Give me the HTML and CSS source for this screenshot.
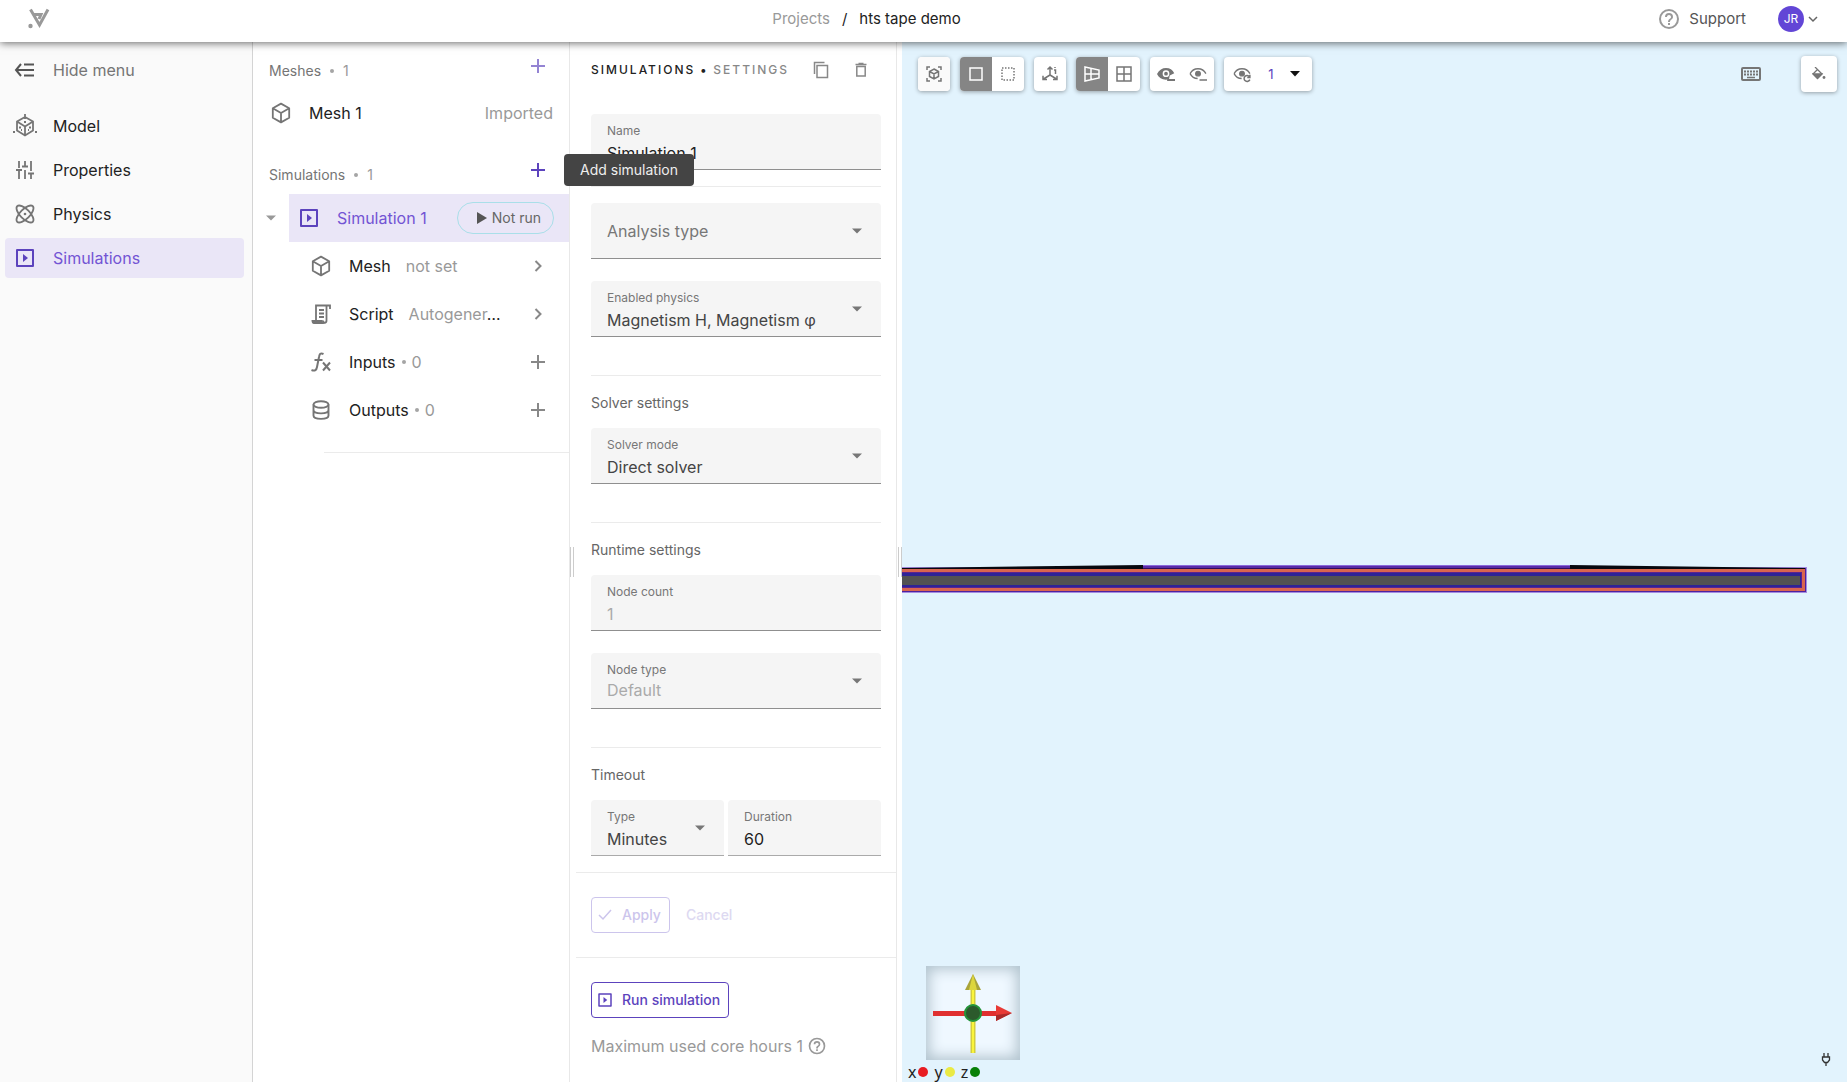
FILE: index.html
```html
<!DOCTYPE html>
<html lang="en">
<head>
<meta charset="utf-8">
<title>hts tape demo</title>
<link rel="stylesheet" href="styles.css">
</head>
<body>
<svg class="defs" aria-hidden="true">
  <defs>
    <symbol id="i-play-box" viewBox="0 0 24 24"><path d="M4 4h16v16H4z" fill="none" stroke="currentColor" stroke-width="2" stroke-linejoin="round"/><path d="M10 8v8l5-4z" fill="currentColor"/></symbol>
    <symbol id="i-cube" viewBox="0 0 24 24"><path d="M12 2.6 20.2 7.2v9.6L12 21.4 3.8 16.800V7.200zM3.800 7.200 12 12l8.200-4.800M12 12v9.400" fill="none" stroke="currentColor" stroke-width="1.800" stroke-linejoin="round"/></symbol>
    <symbol id="i-plus" viewBox="0 0 24 24"><path d="M12 5v14M5 12h14" stroke="currentColor" stroke-width="2" fill="none"/></symbol>
    <symbol id="i-chevron" viewBox="0 0 24 24"><path d="m9.500 7 5 5-5 5" stroke="currentColor" stroke-width="2" fill="none"/></symbol>
    <symbol id="i-down" viewBox="0 0 24 24"><path d="M7 9.500h10l-5 5z" fill="currentColor"/></symbol>
    <symbol id="i-help" viewBox="0 0 24 24"><path d="M11 18h2v-2h-2v2zm1-16a10 10 0 1 0 0 20 10 10 0 0 0 0-20zm0 18a8 8 0 1 1 0-16 8 8 0 0 1 0 16zm0-14a4 4 0 0 0-4 4h2c0-1.100.9-2 2-2s2 .9 2 2c0 2-3 1.750-3 5h2c0-2.250 3-2.500 3-5a4 4 0 0 0-4-4z" fill="currentColor"/></symbol>
    <symbol id="i-eye" viewBox="0 0 24 24"><path d="M1.500 11.500C3.500 7.500 7.400 5 12 5s8.500 2.500 10.500 6.500M1.500 11.500c2 4 5.500 6.500 10 6.500" fill="none" stroke="currentColor" stroke-width="1.800"/><circle cx="12" cy="11.500" r="3.200" fill="currentColor"/></symbol>
  </defs>
</svg>

<header class="topbar">
  <a class="logo" href="#" aria-label="Home">
    <svg width="24" height="24" viewBox="0 0 24 24"><path d="M4.500 2.500 13.500 18 22 2.500M7 7.500h8l-2 4.500" fill="none" stroke="#999" stroke-width="3"/><circle cx="4.500" cy="19" r="2.200" fill="#999"/></svg>
  </a>
  <nav class="crumbs" aria-label="Breadcrumb">
    <a href="#">Projects</a><span>/</span><span>hts tape demo</span>
  </nav>
  <div class="account">
    <a class="support" href="#"><svg width="24" height="24"><use href="#i-help"/></svg>Support</a>
    <button class="user" type="button"><span class="avatar">JR</span><svg width="12" height="12" viewBox="0 0 12 12"><path d="m2 4 4 4 4-4" fill="none" stroke="#666" stroke-width="1.500"/></svg></button>
  </div>
</header>

<main class="workspace">
  <nav class="menu" aria-label="Main">
    <button class="menu-item hide" type="button">
      <svg width="24" height="24" viewBox="0 0 24 24"><path d="M8 6 3 12l5 6M3 12h18M11 6.500h10M11 17.500h10" fill="none" stroke="currentColor" stroke-width="2"/></svg>Hide menu</button>
    <a class="menu-item" href="#">
      <svg width="24" height="24" viewBox="0 0 24 24"><path d="M12 3 20 7.500v9L12 21.500 4 16.500v-9zM4 7.500l8 5 8-5M12 12.500v9M12 0v5" fill="none" stroke="currentColor" stroke-width="1.800"/><path d="M0 18h2M22 18h2M6 13.500h2M16 13.500h2M11 8h2M8 16h1M15 16h1" stroke="currentColor" stroke-width="1.800"/></svg>Model</a>
    <a class="menu-item" href="#">
      <svg width="24" height="24" viewBox="0 0 24 24"><path d="M6 3v7M3 12h6M6 12v9M12 3v5M9 8.500h6M12 12v9M18 3v10M15 15.500h6M18 15.500V21" fill="none" stroke="currentColor" stroke-width="1.800"/></svg>Properties</a>
    <a class="menu-item" href="#">
      <svg width="24" height="24" viewBox="0 0 24 24"><g fill="none" stroke="currentColor" stroke-width="1.800"><ellipse cx="12" cy="12" rx="11" ry="4.800" transform="rotate(45 12 12)"/><ellipse cx="12" cy="12" rx="11" ry="4.800" transform="rotate(-45 12 12)"/></g><circle cx="12" cy="12" r="1.300" fill="currentColor"/></svg>Physics</a>
    <a class="menu-item active" href="#" aria-current="page"><svg width="24" height="24"><use href="#i-play-box"/></svg>Simulations</a>
  </nav>

  <section class="tree" aria-label="Simulation tree">
    <div class="group-head">
      <span>Meshes</span><i class="dot"></i><span class="count">1</span>
      <button class="icon-btn faded" type="button" aria-label="Add mesh"><svg width="24" height="24"><use href="#i-plus"/></svg></button>
    </div>
    <div class="mesh-row"><svg width="24" height="24"><use href="#i-cube"/></svg><span>Mesh 1</span><span class="state">Imported</span></div>

    <div class="group-head second">
      <span>Simulations</span><i class="dot"></i><span class="count">1</span>
      <button class="icon-btn" type="button" aria-label="Add simulation"><svg width="24" height="24"><use href="#i-plus"/></svg></button>
      <span class="tooltip" role="tooltip">Add simulation</span>
    </div>
    <div class="sim-row">
      <button class="expander" type="button" aria-label="Collapse"><svg width="24" height="24"><use href="#i-down"/></svg></button>
      <div class="sim-name"><svg width="24" height="24"><use href="#i-play-box"/></svg><span>Simulation 1</span>
        <span class="badge"><svg width="10" height="12" viewBox="0 0 10 12"><path d="M0 0v12l10-6z" fill="#555"/></svg>Not run</span></div>
    </div>
    <a class="leaf" href="#"><svg width="24" height="24"><use href="#i-cube"/></svg><span>Mesh</span><span class="note">not set</span><svg class="end" width="24" height="24"><use href="#i-chevron"/></svg></a>
    <a class="leaf" href="#"><svg width="24" height="24" viewBox="0 0 24 24"><path d="M7 18V3.500h14v3.500M17.500 4v14.500c0 3-3.500 3-3.500 0M10 8h5M10 11.500h5M10 15h5" fill="none" stroke="currentColor" stroke-width="1.800"/><path d="M2.500 18h11c0 2 .5 3 2.500 4H5c-2 0-2.500-2-2.500-4z" fill="currentColor"/></svg><span>Script</span><span class="note clip"><span>Autogener</span>…</span><svg class="end" width="24" height="24"><use href="#i-chevron"/></svg></a>
    <div class="leaf"><svg width="24" height="24" viewBox="0 0 24 24"><path d="M14.500 4c-3-1.500-4 0-4.500 3L8 17c-.5 3-2 4.500-5.500 3M5.500 10h8M14 12.500l7 8M21 12.500l-7 8" fill="none" stroke="currentColor" stroke-width="2"/></svg><span>Inputs</span><i class="dot"></i><span class="count">0</span><button class="icon-btn end" type="button" aria-label="Add input"><svg width="24" height="24"><use href="#i-plus"/></svg></button></div>
    <div class="leaf"><svg width="24" height="24" viewBox="0 0 24 24"><path d="M4.500 6.500v11c0 4.500 15 4.500 15 0v-11M4.500 12c0 4.500 15 4.500 15 0" fill="none" stroke="currentColor" stroke-width="1.900"/><ellipse cx="12" cy="6.500" rx="7.500" ry="3.200" fill="none" stroke="currentColor" stroke-width="1.900"/></svg><span>Outputs</span><i class="dot"></i><span class="count">0</span><button class="icon-btn end" type="button" aria-label="Add output"><svg width="24" height="24"><use href="#i-plus"/></svg></button></div>
    <hr class="tree-rule">
  </section>

  <section class="settings" aria-label="Simulation settings">
    <div class="grip"></div>
    <div class="settings-body">
      <div class="settings-head">
        <h1>Simulations <b>•</b> <span>Settings</span></h1>
        <button type="button" aria-label="Duplicate"><svg width="20" height="20" viewBox="0 0 20 20"><path d="M6 5.500h10.500v12H6zM3.500 14V2.500h10" fill="none" stroke="currentColor" stroke-width="1.500"/></svg></button>
        <button type="button" aria-label="Delete"><svg width="20" height="20" viewBox="0 0 20 20"><path d="M5.800 6.500h8.400v9.500H5.800zM4.500 4.500h11M7.500 3.500h5" fill="none" stroke="currentColor" stroke-width="1.500"/></svg></button>
      </div>
      <div class="field"><label for="name">Name</label><input id="name" type="text" value="Simulation 1"></div>
      <hr>
      <div class="field empty"><select id="analysis" aria-label="Analysis type"><option>Analysis type</option></select><svg width="24" height="24"><use href="#i-down"/></svg></div>
      <div class="field stacked"><label for="physics">Enabled physics</label><select id="physics"><option>Magnetism H, Magnetism φ</option></select><svg width="24" height="24"><use href="#i-down"/></svg></div>
      <hr class="wide">
      <h2>Solver settings</h2>
      <div class="field"><label for="mode">Solver mode</label><select id="mode"><option>Direct solver</option></select><svg width="24" height="24"><use href="#i-down"/></svg></div>
      <hr class="wide">
      <h2>Runtime settings</h2>
      <div class="field"><label for="count">Node count</label><input id="count" type="text" value="1" disabled></div>
      <div class="field stacked"><label for="ntype">Node type</label><select id="ntype" class="raised" disabled><option>Default</option></select><svg width="24" height="24"><use href="#i-down"/></svg></div>
      <hr class="wide">
      <h2>Timeout</h2>
      <div class="pair">
        <div class="field light"><label for="ttype">Type</label><select id="ttype"><option>Minutes</option></select><svg width="24" height="24"><use href="#i-down"/></svg></div>
        <div class="field light"><label for="dur">Duration</label><input id="dur" type="text" value="60"></div>
      </div>
    </div>
    <div class="actions">
      <button class="btn" type="button" disabled><svg width="16" height="16" viewBox="0 0 16 16"><path d="m2 8 4 4 8-9" fill="none" stroke="currentColor" stroke-width="1.500"/></svg>Apply</button>
      <button class="btn plain" type="button" disabled>Cancel</button>
    </div>
    <div class="run">
      <button class="btn" type="button"><svg width="18" height="18"><use href="#i-play-box"/></svg>Run simulation</button>
      <p>Maximum used core hours 1 <svg width="20" height="20"><use href="#i-help"/></svg></p>
    </div>
  </section>
  <div class="splitter"><div class="grip"></div></div>

  <section class="viewer" aria-label="3D view">
    <svg class="tape" width="100%" height="30">
      <svg x="-40" y="0" width="100%" height="30" overflow="visible">
        <rect x="0" y="2" width="100%" height="26" fill="#a58be0"/>
        <rect x="-1" y="3" width="100%" height="24" fill="#4c22a0"/>
        <rect x="-2" y="4" width="100%" height="22" fill="#d9654f"/>
        <rect x="-5" y="7" width="100%" height="16" fill="#5a2390"/>
        <rect x="-6" y="8" width="100%" height="14" fill="#2e2396"/>
        <rect x="-7" y="11" width="100%" height="9" fill="#525252"/>
      </svg>
      <path d="M0 3 241 0v4H0z" fill="#08080f"/>
      <path d="M668 0 903 3v1H668z" fill="#08080f"/>
      <path d="M241 0h427v4H241z" fill="#5a2ba6"/>
      <path d="M241 0h427v1H241z" fill="#8968dc"/>
      <path d="M241 3h427v1H241z" fill="#2f0d5c"/>
    </svg>

    <div class="toolbar">
      <div class="tools"><button class="pale" type="button" aria-label="Fit view"><svg width="18" height="18" viewBox="0 0 18 18"><path d="M2 5V2h3M13 2h3v3M16 13v3h-3M5 16H2v-3" /><path d="m9 4 4.500 2.500v5L9 14l-4.500-2.500v-5zM4.500 6.500 9 9l4.500-2.500M9 9v5"/></svg></button></div>
      <div class="tools"><button class="on" type="button" aria-label="Solid"><svg width="18" height="18" viewBox="0 0 18 18"><path d="M3 3h12v12H3z"/></svg></button><button type="button" aria-label="Box select"><svg width="18" height="18" viewBox="0 0 18 18"><path d="M3 3h12v12H3z" stroke-dasharray="1.500 1.500"/></svg></button></div>
      <div class="tools"><button type="button" aria-label="Axes"><svg width="18" height="18" viewBox="0 0 18 18"><path d="M9 10V2M6.500 4.500 9 2l2.500 2.500M9 10l-6.500 4M2 10.800V14.500h4M9 10l6.500 4M16 10.800v3.700h-4M14 2v1M13 5h1.500v4"/></svg></button></div>
      <div class="tools"><button class="on" type="button" aria-label="Perspective"><svg width="18" height="18" viewBox="0 0 18 18"><path d="M2 2l14 3v8L2 16zM2 9h14M8 3.500v11"/></svg></button><button type="button" aria-label="Orthographic"><svg width="18" height="18" viewBox="0 0 18 18"><path d="M2 2h14v14H2zM9 2v14M2 9h14"/></svg></button></div>
      <div class="tools"><button type="button" aria-label="Hide selected"><svg width="18" height="18" viewBox="0 0 24 24"><path d="M0 12C3 6.500 7 4 12 4s9 2.500 11 7l-6 3-1 5C9 21 3 18 0 12z" fill="currentColor" stroke="none"/><circle cx="12" cy="11.500" r="3.500" stroke="#fff" stroke-width="2"/><path d="M13.500 20H24" stroke-width="2.500"/></svg></button><button type="button" aria-label="Hide others"><svg width="18" height="18" viewBox="0 0 24 24"><use href="#i-eye"/><path d="M14 20h10" stroke-width="2"/></svg></button></div>
      <div class="tools wide"><button type="button" aria-label="Reset visibility"><svg width="18" height="18" viewBox="0 0 24 24"><use href="#i-eye"/><path d="M22 15.500a4 4 0 1 0 .5 4M22.500 13v3.500H19" stroke-width="2"/></svg></button><button class="level" type="button">1<svg width="10" height="6" viewBox="0 0 10 6"><path d="M0 0h10L5 5.500z" fill="#111" stroke="none"/></svg></button></div>
      <button class="keys" type="button" aria-label="Keyboard shortcuts"><svg width="20" height="14" viewBox="0 0 20 14"><rect x="1" y="1" width="18" height="12" rx="1" stroke-width="2"/><path d="M3 4.500h14M3 7.500h14" stroke-width="2" stroke-dasharray="2 1"/><path d="M6 10.500h8"/></svg></button>
      <button class="paint" type="button" aria-label="Background colour"><svg width="14" height="14" viewBox="0 0 14 14"><path d="M3 0l7 7-4.500 4.500L1 7l4.500-4.500" stroke-width="1.300"/><path d="M1.500 7h8l-4 4z" fill="currentColor"/><circle cx="12" cy="10.500" r="1.400" fill="currentColor" stroke="none"/></svg></button>
    </div>

    <div class="viewer-foot">
      <div class="gizmo">
        <svg width="94" height="94" viewBox="0 0 94 94">
          <path d="M44.500 20h5v67h-5z" fill="#d3cd3d"/><path d="M46 20h2v67h-2z" fill="#faf53c"/>
          <path d="M47 8l8 16H39z" fill="#a9a43a"/><path d="M47 8l4 16h-8z" fill="#ddd63c"/>
          <path d="M7 45h64v5H7z" fill="#e03030"/><path d="M70 39l16 8-16 8z" fill="#e83a36"/><path d="M70 49l16-2-16 8z" fill="#a92a2a"/>
          <circle cx="47" cy="47" r="8" fill="#2c5a2c" stroke="#24943a" stroke-width="2"/>
        </svg>
      </div>
      <div class="legend"><span>x<i class="x"></i></span><span>y<i class="y"></i></span><span>z<i class="z"></i></span></div>
      <svg class="plug" width="10" height="14" viewBox="0 0 10 14"><path d="M3 0v4M7 0v4M1.500 4h7v3L6.500 9.500h-3L1.500 7zM5 9v4" fill="none" stroke="#333" stroke-width="1.300"/></svg>
    </div>
  </section>
</main>
</body>
</html>
```
FILE: styles.css
```css
* { box-sizing: border-box; }

body {
  margin: 0;
  height: 100vh;
  display: flex;
  flex-direction: column;
  overflow: hidden;
  font: 16px/20px Inter, "Liberation Sans", sans-serif;
  color: #222;
  background: #fff;
}

button, input, select { font: inherit; color: inherit; }
button { border: 0; padding: 0; background: none; display: flex; align-items: center; }
a { color: inherit; text-decoration: none; }
svg { flex: none; display: block; }
hr { border: 0; border-top: 1px solid #ebebeb; margin: 16px 0; width: 100%; }
.defs { position: absolute; width: 0; height: 0; }

/* Top bar */
.topbar {
  flex: none;
  display: grid;
  grid-template-columns: 20fr auto 23fr;
  align-items: center;
  height: 42px;
  padding: 0 28px 5px 26px;
  background: #fff;
  box-shadow: 0 1px 8px rgba(0, 0, 0, .6);
  z-index: 2;
}
.crumbs { display: flex; gap: 12px; font-size: 15px; }
.crumbs a { color: #999; }
.account { display: flex; justify-content: flex-end; align-items: center; gap: 32px; }
.support { display: flex; align-items: center; gap: 8px; font-size: 15px; color: #555; }
.support svg { color: #999; }
.user { gap: 3px; }
.avatar {
  width: 26px; height: 26px; border-radius: 50%;
  background: #6246d6; color: #fff; font-size: 12px; line-height: 26px; text-align: center;
}

.workspace { flex: 1; display: flex; min-height: 0; }

/* Main menu */
.menu {
  flex: none;
  width: 253px;
  padding: 8px 8px 8px 5px;
  display: flex;
  flex-direction: column;
  gap: 4px;
  background: #fafafa;
  border-right: 1px solid #d4d4d4;
}
.menu-item { display: flex; align-items: center; gap: 16px; height: 40px; padding-left: 8px; border-radius: 4px; }
.menu-item svg { color: #757575; }
.menu-item.hide { color: #757575; margin-bottom: 12px; }
.menu-item.hide svg { color: #555; }
.menu-item.active { background: #eae6f7; color: #7354d4; }
.menu-item.active svg { color: #5c43bd; }

/* Simulation tree */
.tree { flex: none; width: 317px; padding-top: 16px; border-right: 1px solid #e8e8e8; }
.group-head {
  position: relative;
  display: flex; align-items: center; gap: 9px;
  height: 26px; padding: 0 19px 0 16px;
  font-size: 14px; color: #757575;
}
.group-head.second { margin-top: 25px; }
.dot { width: 4px; height: 4px; border-radius: 50%; background: #a5a5a5; }
.count { color: #999; }
.icon-btn { color: #5c43bd; }
.group-head .icon-btn { margin-left: auto; align-self: flex-start; height: 16px; }
.icon-btn.faded { opacity: .65; }
.mesh-row { display: flex; align-items: center; height: 48px; margin: 5px 16px 0; gap: 16px; }
.mesh-row svg, .leaf svg { color: #757575; }
.state { margin-left: auto; color: #999; }
.tooltip {
  position: absolute; z-index: 3; left: 311px; top: -8px;
  padding: 6px 16px; border-radius: 4px;
  background: #444; color: #eee; white-space: nowrap;
}
.sim-row { display: flex; height: 48px; margin-top: 6px; }
.expander { width: 36px; padding-left: 6px; color: #999; }
.sim-name { flex: 1; display: flex; align-items: center; padding: 0 15px 0 8px; background: #eae6f7; color: #7354d4; }
.sim-name > svg { color: #5c43bd; margin-right: 16px; }
.badge {
  display: flex; align-items: center; gap: 5px; margin-left: auto;
  height: 32px; padding: 0 12px 0 19px;
  border: 1px solid #a9dfe9; border-radius: 16px;
  font-size: 14px; color: #666;
}
.leaf { display: flex; align-items: center; height: 48px; padding: 0 19px 0 56px; }
.leaf > svg:first-child { margin-right: 16px; }
.note { margin-left: 15px; color: #999; }
.clip { color: #222; }
.clip span { color: #999; }
.leaf .dot { margin: 0 6px; }
.leaf .end { margin-left: auto; color: #888; }
.leaf .end svg { color: #888; }
.tree-rule { width: auto; margin: 18px 0 0 71px; }

/* Settings panel */
.settings { flex: none; position: relative; width: 327px; border-right: 1px solid #e8e8e8; }
.grip { width: 4px; height: 30px; border: solid #ccc; border-width: 0 1px; }
.settings > .grip { position: absolute; left: 0; top: 505px; }
.splitter { flex: none; width: 5px; padding: 505px 0 0 1px; }
.settings-body { padding: 0 15px 0 21px; }
.settings-head { display: flex; align-items: center; gap: 20px; height: 56px; margin-bottom: 16px; padding-right: 10px; color: #888; }
.settings-head h1 { flex: 1; margin: 0; font-size: 12px; line-height: 22px; font-weight: 500; letter-spacing: 2px; text-transform: uppercase; white-space: nowrap; color: #222; }
.settings-head h1 span { color: #888; }
.settings h2 { margin: 0 0 15px; font-size: 14px; font-weight: 400; color: #666; }
.settings hr.wide { margin: 38px 0 17px; }

.field { display: grid; align-items: center; height: 56px; background: #f5f5f5; border-radius: 4px 4px 0 0; border-bottom: 1px solid #8f8f8f; }
.field.stacked { margin-top: 22px; }
.field.light { border-color: #aaa; }
.field > * { grid-area: 1 / 1; }
.field label { z-index: 1; align-self: start; padding: 7px 16px 0; font-size: 12px; color: #777; pointer-events: none; }
.field input, .field select {
  width: 100%; height: 55px; margin: 0; padding: 22px 16px 0; border: 0; outline: 0;
  background: none; appearance: none; color: #222;
}
.field select { color: #444; }
.field.empty select { padding-top: 0; color: #777; }
.field input:disabled, .field select:disabled { color: #aaa; opacity: 1; }
.field select.raised { padding-top: 18px; }
.field svg { justify-self: end; margin-right: 12px; color: #777; pointer-events: none; }
.pair { display: grid; grid-template-columns: 133px 1fr; gap: 4px; }

.actions { display: flex; gap: 16px; margin: 16px 0 0 6px; padding: 24px 15px; border: solid #ebebeb; border-width: 1px 0; }
.btn { height: 36px; padding: 0 8px 0 4px; gap: 8px; border: 1px solid #5c43bd; border-radius: 4px; font-size: 14px; font-weight: 500; color: #5c43bd; }
.btn svg { width: 18px; }
.btn:disabled { color: #ccc5ec; border-color: #ccc5ec; }
.btn.plain { border: 0; padding: 0; color: #ddd9f1; }
.run { padding: 24px 21px; }
.run p { display: flex; align-items: center; gap: 4px; margin: 18px 0 0; color: #999; white-space: nowrap; }

/* 3D view */
.viewer { flex: 1; position: relative; display: flex; flex-direction: column; justify-content: space-between; min-width: 0; background: #e2f3fd; }
.tape { position: absolute; left: 0; top: 523px; overflow: hidden; }
.toolbar { position: relative; display: flex; gap: 10px; padding: 14px 10px 0 16px; color: #757575; }
.toolbar svg { fill: none; stroke: currentColor; stroke-width: 1.5; }
.tools { display: flex; height: 34px; border-radius: 4px; overflow: hidden; background: #fff; box-shadow: 0 1px 4px rgba(0, 0, 0, .35); margin-top: 1px; }
.tools button { width: 32px; justify-content: center; }
.tools .on { background: #858585; color: #fff; }
.tools .pale { background: #fafafa; }
.tools.wide { padding: 0 2px; }
.tools .level { width: 52px; gap: 16px; font-size: 13px; color: #5c43bd; }
.keys { margin-left: auto; margin-right: 30px; }
.paint { width: 36px; height: 36px; justify-content: center; border-radius: 4px; background: #fff; box-shadow: 0 1px 4px rgba(0, 0, 0, .35); }
.viewer-foot { position: relative; display: grid; grid-template-columns: 1fr auto; align-items: center; padding: 0 16px 0 6px; }
.gizmo { grid-column: 1 / -1; width: 94px; margin: 0 0 2px 18px; background: #eff8ff; box-shadow: inset 0 0 14px 3px #b0c2cd; }
.legend { display: flex; gap: 6px; height: 20px; font: 16px/20px "Noto Sans", sans-serif; }
.legend span { display: flex; align-items: center; gap: 2px; }
.legend i { width: 10px; height: 10px; border-radius: 50%; }
.legend .x { background: #e81c22; }
.legend .y { background: #eaea45; }
.legend .z { background: #088008; }
.plug { align-self: start; margin-top: -9px; }
```
